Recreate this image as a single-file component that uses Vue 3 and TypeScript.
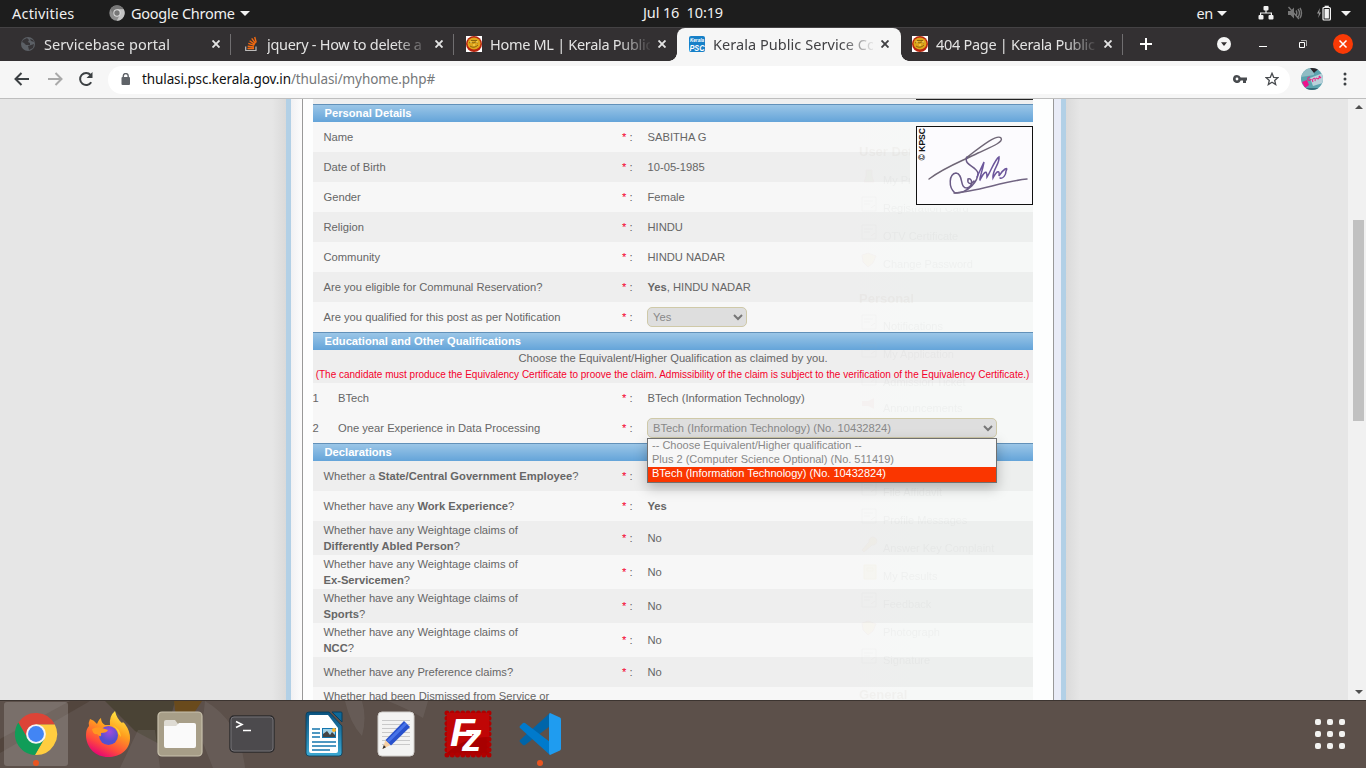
<script setup lang="ts">
interface Tab { title: string; icon: string; active?: boolean; snug?: boolean }
interface Row { label?: string; bold?: string; tail?: string; lines?: boolean; value?: string; strong?: string; select?: boolean; shade?: boolean }
interface Ghost { text: string; y: number; head?: boolean; icon?: string }

const tabs: Tab[] = [
  { title: 'Servicebase portal', icon: 'globe' },
  { title: 'jquery - How to delete a', icon: 'stack', snug: true },
  { title: 'Home ML | Kerala Public', icon: 'seal', snug: true },
  { title: 'Kerala Public Service Co', icon: 'psc', active: true },
  { title: '404 Page | Kerala Public', icon: 'seal', snug: true },
]

const personal: Row[] = [
  { label: 'Name', value: 'SABITHA G' },
  { label: 'Date of Birth', value: '10-05-1985', shade: true },
  { label: 'Gender', value: 'Female' },
  { label: 'Religion', value: 'HINDU', shade: true },
  { label: 'Community', value: 'HINDU NADAR' },
  { label: 'Are you eligible for Communal Reservation?', strong: 'Yes', value: ', HINDU NADAR', shade: true },
  { label: 'Are you qualified for this post as per Notification', select: true },
]

const declarations: Row[] = [
  { label: 'Whether a ', bold: 'State/Central Government Employee', tail: '?', shade: true },
  { label: 'Whether have any ', bold: 'Work Experience', tail: '?', strong: 'Yes' },
  { label: 'Whether have any Weightage claims of', lines: true, bold: 'Differently Abled Person', tail: '?', value: 'No', shade: true },
  { label: 'Whether have any Weightage claims of', lines: true, bold: 'Ex-Servicemen', tail: '?', value: 'No' },
  { label: 'Whether have any Weightage claims of', lines: true, bold: 'Sports', tail: '?', value: 'No', shade: true },
  { label: 'Whether have any Weightage claims of', lines: true, bold: 'NCC', tail: '?', value: 'No' },
  { label: 'Whether have any Preference claims?', value: 'No', shade: true },
  { label: 'Whether had been Dismissed from Service or', lines: true, bold: '' },
]

const ghosts: Ghost[] = [
  { text: 'User Details', y: 152, head: true },
  { text: 'My Profile', y: 180, icon: 'user' },
  { text: 'Registration Card', y: 208, icon: 'card' },
  { text: 'OTV Certificate', y: 236, icon: 'card' },
  { text: 'Change Password', y: 264, icon: 'gold' },
  { text: 'Personal', y: 299, head: true },
  { text: 'Notifications', y: 326, icon: 'card' },
  { text: 'My Application', y: 354, icon: 'card' },
  { text: 'Admission Ticket', y: 382, icon: 'card' },
  { text: 'Announcements', y: 408, icon: 'red' },
  { text: 'File Affidavit', y: 492, icon: 'card' },
  { text: 'Profile Messages', y: 520, icon: 'card' },
  { text: 'Answer Key Complaint', y: 548, icon: 'key' },
  { text: 'My Results', y: 576, icon: 'book' },
  { text: 'Feedback', y: 604, icon: 'card' },
  { text: 'Photograph', y: 632, icon: 'gold' },
  { text: 'Signature', y: 660, icon: 'card' },
  { text: 'General', y: 695, head: true },
]

const options = [
  '-- Choose Equivalent/Higher qualification --',
  'Plus 2 (Computer Science Optional) (No. 511419)',
  'BTech (Information Technology) (No. 10432824)',
]
</script>

<template>
  <div class="screen">
    <header class="topbar">
      <div class="top-left">
        <span class="activities">Activities</span>
        <svg class="app-icon" width="16" height="16" viewBox="0 0 48 48">
          <circle cx="24" cy="24" r="23" fill="#8d8d8d" />
          <path d="M4 13A23 23 0 0 1 44 13H24L15 29Z" fill="#777" />
          <path d="M44 13A23 23 0 0 1 23 47L33 29 24 13Z" fill="#c3c3c3" />
          <circle cx="24" cy="24" r="11" fill="#ddd" /><circle cx="24" cy="24" r="8" fill="#777" />
        </svg>
        <span class="app-name">Google Chrome</span>
        <i class="caret"></i>
      </div>
      <div class="clock">Jul 16&nbsp; 10:19</div>
      <div class="tray">
        <span class="lang">en</span><i class="caret"></i>
        <svg class="net" width="16" height="14" viewBox="0 0 16 14" fill="#f2f2f2">
          <rect x="5.5" y="0" width="5" height="4.5" rx="1" /><rect x="0.5" y="9" width="5" height="4.5" rx="1" /><rect x="10.5" y="9" width="5" height="4.5" rx="1" />
          <path d="M7.4 4h1.2v2.4H14V10h-1.2V7.6H3.2V10H2V6.4h5.4z" />
        </svg>
        <svg class="vol" width="16" height="14" viewBox="0 0 16 14" fill="none" stroke="#777" stroke-width="1.4">
          <path d="M1 5h2.5L7 1.5v11L3.500 9H1z" fill="#777" stroke="none" /><path d="M9 4.500q1.600 2.500 0 5M11 3q3 4 0 8M13 1.800q3 5.200 0 10.400M1.500 1l10.500 12" />
        </svg>
        <svg class="bat" width="16" height="16" viewBox="0 0 16 16">
          <path d="M4 3L1 8.600h2L2.200 13 5 7.400H3.200z" fill="#999" />
          <rect x="7" y="2.500" width="7.400" height="12.500" rx="1" fill="none" stroke="#f2f2f2" stroke-width="1.200" /><rect x="8.600" y="0.700" width="4.200" height="2" fill="#f2f2f2" /><rect x="8.500" y="4" width="4.400" height="9.500" fill="#f2f2f2" />
        </svg>
        <i class="caret"></i>
      </div>
    </header>

    <nav class="tabs">
      <div v-for="(tab, i) in tabs" :key="i" class="tab" :class="{ active: tab.active, bare: i === 2, snug: tab.snug }">
        <svg v-if="tab.icon === 'globe'" class="fav" viewBox="0 0 16 16">
          <circle cx="8" cy="8" r="7" fill="#5c6066" /><path d="M3 4l4-2 2 2-1 2 2 1v2H6L4 7 2 6zM8 10l3-1 3-1-1 4-4 2zM10 3l3 1 1 2-3-1z" fill="#373538" />
        </svg>
        <svg v-else-if="tab.icon === 'stack'" class="fav" viewBox="0 0 16 16" fill="none">
          <path d="M2.700 10.500v4h10.300v-4" stroke="#bcbbbb" stroke-width="1.200" />
          <path d="M4.500 12.500h6.500M4.700 10.200l6.300.8M5.300 7.300l6 2M6.600 4.700l5.200 3.700M8.700 2.300l3.800 5M11.700 1l1.500 5.500" stroke="#f46a10" stroke-width="1.400" />
        </svg>
        <svg v-else-if="tab.icon === 'seal'" class="fav" viewBox="0 0 16 16">
          <path fill="#fff" d="M0 0h16v16H0z" /><circle cx="8" cy="8" r="8" fill="#b9250f" /><ellipse cx="8" cy="7.500" rx="6.500" ry="6" fill="#dfa51b" /><path d="M3 7q2-2 4 0 2-2 5 0M4 10q4 3 8-1M5 4.500h6" stroke="#8a6510" fill="none" /><path d="M4 6h2M10 6h2M7 9h2" stroke="#ffe46c" />
        </svg>
        <svg v-else class="fav" viewBox="0 0 16 16">
          <rect width="16" height="16" rx="2" fill="#1680c8" /><text x="1" y="5.800" class="psc-small" textLength="14" lengthAdjust="spacingAndGlyphs">Kerala</text><text x="0.500" y="14.500" class="psc-big" textLength="15" lengthAdjust="spacingAndGlyphs">PSC</text>
        </svg>
        <span class="tab-title">{{ tab.title }}</span>
        <svg class="tab-x" width="8" height="8" viewBox="0 0 8 8"><path d="M.5.5l7 7M7.500.5l-7 7" stroke="currentColor" stroke-width="1.900" /></svg>
      </div>
      <svg class="plus" width="12" height="12" viewBox="0 0 12 12"><path d="M6 0v12M0 6h12" stroke="#fff" stroke-width="2" /></svg>
      <svg class="drop" width="14" height="14" viewBox="0 0 14 14"><circle cx="7" cy="7" r="7" fill="#f5f5f5" /><path d="M4 5.200h6L7 9z" fill="#333032" /></svg>
      <svg class="win" width="8" height="8" viewBox="0 0 8 8"><path d="M0 6.500h8" stroke="#fff" /></svg>
      <svg class="win2" width="8" height="8" viewBox="0 0 8 8" fill="none" stroke="#fff"><path d="M.5 2.500h5v5h-5z" /><path d="M2 .5h5.500V6" stroke="#aaa" /></svg>
      <svg class="quit" width="20" height="20" viewBox="0 0 20 20"><circle cx="10" cy="10" r="10" fill="#f93a06" /><path d="M6.500 6.500l7 7M13.500 6.500l-7 7" stroke="#fff" stroke-width="1.500" /></svg>
    </nav>

    <div class="toolbar">
      <svg class="back" width="16" height="14" viewBox="0 0 16 14" fill="none" stroke="#3c4043" stroke-width="2"><path d="M15 7H2M7.500 1l-6 6 6 6" /></svg>
      <svg class="fwd" width="16" height="14" viewBox="0 0 16 14" fill="none" stroke="#a9a9a9" stroke-width="2"><path d="M1 7h13M8.500 1l6 6-6 6" /></svg>
      <svg class="reload" width="16" height="16" viewBox="0 0 16 16"><path d="M13.200 11.200A6 6 0 1 1 12.600 4" fill="none" stroke="#3c4043" stroke-width="2" /><path d="M14.500 1v6h-6z" fill="#3c4043" /></svg>
      <div class="address">
        <svg class="lock" width="10" height="12" viewBox="0 0 10 12"><rect x="0.500" y="4" width="8.500" height="8" rx="1" fill="#5f6368" /><path d="M2.300 4.500V3a2.400 2.400 0 0 1 4.900 0v1.500" fill="none" stroke="#5f6368" stroke-width="1.400" /></svg>
        <span class="url"><b>thulasi.psc.kerala.gov.in</b>/thulasi/myhome.php#</span>
        <svg class="key" width="14" height="8" viewBox="0 0 14 8"><path d="M4 0a4 4 0 1 0 3.700 5.400H10V8h3V5.400h1V2.600H7.700A4 4 0 0 0 4 0zm0 2.600a1.400 1.400 0 1 1 0 2.800 1.400 1.400 0 0 1 0-2.800z" fill="#484b4f" fill-rule="evenodd" /></svg>
        <svg class="star" width="14" height="14" viewBox="0 0 14 14"><path d="M7 1.300l1.700 4 4.200.3-3.200 2.800 1 4.200L7 10.300l-3.700 2.300 1-4.200L1.100 5.600l4.200-.3z" fill="none" stroke="#484b4f" stroke-width="1.300" /></svg>
      </div>
      <svg class="avatar" width="22" height="22" viewBox="0 0 22 22">
        <defs><clipPath id="av"><circle cx="11" cy="11" r="11" /></clipPath></defs>
        <g clip-path="url(#av)"><path fill="#5ba3ae" d="M0 0h22v22H0z" /><path d="M0 0h13v7L0 9z" fill="#8fbcc4" /><path d="M9 0h10l-4 3-2 2z" fill="#2b252a" /><path d="M9 10l13-5v10l-10 3z" fill="#b9d1da" /><path d="M1 14l5-2 2 5-4 3z" fill="#ed128d" /><path d="M9 9q-3 0-2 3 2 1 3-1M11 11l1 3M12 11q3-2 2 2M15 10l2 1q2-1 1-3M18 8l2 2" stroke="#e82783" stroke-width="1.100" fill="none" /><path d="M5 20h14v2H5z" fill="#356c7a" /></g>
      </svg>
      <svg class="dots" width="4" height="14" viewBox="0 0 4 14" fill="#3c4043"><circle cx="2" cy="2" r="1.500" /><circle cx="2" cy="7" r="1.500" /><circle cx="2" cy="12" r="1.500" /></svg>
    </div>

    <main class="page">
      <div class="gutter left"></div>
      <div class="frame">
        <div class="paper">
          <div class="sheet">
            <div class="sliver"></div>
            <h2>Personal Details</h2>
            <div v-for="row in personal" :key="row.label" class="row" :class="{ shade: row.shade }">
              <div class="label">{{ row.label }}</div>
              <div class="req"><em>*</em> :</div>
              <div class="value">
                <div v-if="row.select" class="select short">Yes<svg width="10" height="7" viewBox="0 0 10 7"><path d="M1 1l4 4 4-4" /></svg></div>
                <template v-else><b v-if="row.strong">{{ row.strong }}</b>{{ row.value }}</template>
              </div>
            </div>
            <h2>Educational and Other Qualifications</h2>
            <div class="note">
              <p>Choose the Equivalent/Higher Qualification as claimed by you.</p>
              <p class="warn">(The candidate must produce the Equivalency Certificate to proove the claim. Admissibility of the claim is subject to the verification of the Equivalency Certificate.)</p>
            </div>
            <div class="row">
              <div class="label numbered"><span>1</span>BTech</div>
              <div class="req"><em>*</em> :</div>
              <div class="value">BTech (Information Technology)</div>
            </div>
            <div class="row">
              <div class="label numbered"><span>2</span>One year Experience in Data Processing</div>
              <div class="req"><em>*</em> :</div>
              <div class="value">
                <div class="select long">BTech (Information Technology) (No. 10432824)<svg width="10" height="7" viewBox="0 0 10 7"><path d="M1 1l4 4 4-4" /></svg>
                  <ul class="menu"><li v-for="(o, i) in options" :key="o" :class="{ on: i === 2 }">{{ o }}</li></ul>
                </div>
              </div>
            </div>
            <h2>Declarations</h2>
            <div v-for="(row, i) in declarations" :key="i" class="row" :class="{ shade: row.shade, tall: row.lines }">
              <div class="label"><span>{{ row.label }}<br v-if="row.lines"><b>{{ row.bold }}</b>{{ row.tail }}&nbsp;</span></div>
              <div class="req"><template v-if="i < 7"><em>*</em> :</template></div>
              <div class="value"><b v-if="row.strong">{{ row.strong }}</b>{{ row.value }}</div>
            </div>
          </div>
          <svg class="ghosts" width="175" height="601" viewBox="858 99 175 601">
            <g v-for="g in ghosts" :key="g.text" class="ghost">
              <text :x="g.head ? 859 : 883" :y="g.y + 4" :class="{ head: g.head }">{{ g.text }}</text>
              <path v-if="g.icon === 'card'" :transform="`translate(861 ${g.y - 12})`" d="M1 1h14v14H1zM3 5h9M3 8h6M10 12l4-3" fill="none" stroke="#b6a5a5" />
              <path v-else-if="g.icon === 'gold'" :transform="`translate(861 ${g.y - 12})`" d="M1 3l6-2 8 3-3 7-5 4-5-5z" fill="#f7d680" stroke="#d3a098" />
              <path v-else-if="g.icon === 'red'" :transform="`translate(861 ${g.y - 12})`" d="M1 5h6l6-3v11l-6-3H1z" fill="#e59b9b" />
              <path v-else-if="g.icon === 'key'" :transform="`translate(861 ${g.y - 12})`" d="M1 14l7-8a4 4 0 1 1 3 3l-8 7z" fill="#f5d57b" stroke="#d3a088" />
              <path v-else-if="g.icon === 'book'" :transform="`translate(861 ${g.y - 12})`" d="M3 1h12v14H3zM6 4h6v3H6z" fill="#f4e49c" stroke="#d3b058" />
              <path v-else-if="g.icon === 'user'" :transform="`translate(861 ${g.y - 12})`" d="M5 2h6v6l2 6H3l2-6z" fill="#bcd29a" stroke="#d3a0a0" />
            </g>
          </svg>
          <div class="photo-edge"></div>
          <div class="signature">
            <svg width="115" height="77" viewBox="0 0 115 77" fill="none" stroke-linecap="round">
              <text transform="translate(7.500 33.500) rotate(-90)" class="kpsc" textLength="32.500" lengthAdjust="spacingAndGlyphs">© KPSC</text>
              <path d="M12 52C28 40 43 35 61 26C74 20 87 15 84 11C80 7 66 18 49 31" stroke="#6f6676" stroke-width="1.400" />
              <path d="M50 30C46 38 59 39 61 46C61 54 52 66 38 66C31 60 32 47 39 46C47 47 42 61 50 61C57 59 55 50 51 52C50 57 54 58 57 54" stroke="#6a5a86" stroke-width="1.500" />
              <path d="M60 50L67 35C65 46 62 52 63 53C67 45 70 42 70 50C73 46 78 32 82 30C83 37 75 43 76 51C80 43 83 43 82 49C86 42 92 39 89 44C89 48 86 52 83 51" stroke="#6b559b" stroke-width="1.500" />
              <path d="M37 66C58 65 88 54 110 52" stroke="#716482" stroke-width="1.500" />
            </svg>
          </div>
        </div>
        <div class="lavender"></div>
      </div>
      <div class="gutter right"></div>
      <div class="scroll"><i class="up"></i><div class="thumb"></div><i class="down"></i></div>
    </main>

    <footer class="dock">
      <svg class="wall" width="1366" height="67" viewBox="0 0 1366 67">
        <path d="M0 38L70 0h20L0 52z" fill="#47392f" opacity=".5" /><path d="M105 0h70l-12 45-28-15z" fill="#403c29" opacity=".65" /><path d="M174 0h28l-8 12-18 4z" fill="#694a1c" /><path d="M120 67l18-38 17 0 5 38zM205 0q35 20 40 67h-32l-12-30zM345 0q5 22 17 35 5-18 0-35zM388 0q20 8 35 17l5-17z" fill="#817b76" opacity=".28" />
      </svg>
      <div class="launch focus">
        <svg width="46" height="46" viewBox="0 0 48 48"><path d="M5.540 12.030A22 22 0 0 1 43.600 14H24V24L15.340 29z" fill="#dc4437" /><path d="M43.600 14A22 22 0 0 1 22.860 45.970L32.660 29 24 24V14z" fill="#ffcd40" /><path d="M22.860 45.970A22 22 0 0 1 5.540 12.030L15.340 29 24 24 32.660 29z" fill="#109d58" /><circle cx="24" cy="24" r="10.300" fill="#f4f4f4" /><circle cx="24" cy="24" r="8.300" fill="#4285f4" /></svg>
        <i class="run"></i>
      </div>
      <div class="launch">
        <svg width="46" height="48" viewBox="0 0 46 48">
          <defs><linearGradient id="ff" x1=".8" y1="0" x2=".3" y2="1"><stop offset="0" stop-color="#fff04a" /><stop offset=".4" stop-color="#ffa01e" /><stop offset=".75" stop-color="#ff493d" /><stop offset="1" stop-color="#e40079" /></linearGradient><radialGradient id="fp" cx=".55" cy=".3"><stop offset="0" stop-color="#a34bdc" /><stop offset="1" stop-color="#5450cf" /></radialGradient></defs>
          <path d="M5 9Q9 10 12 14 14 9 16 8q0 5 4 7h5q-1-9 5-14 2 8 7 12 1-2 3 1 5 7 5 14C45 40 35 47 23 47S1 38 1 25q0-6 3-9-1-3 1-7z" fill="url(#ff)" /><circle cx="23.500" cy="25.500" r="9.500" fill="url(#fp)" /><path d="M7 19q5-3 10-1l6 2q-1 3-7 3 1 6-4 1-4 1-5-5z" fill="#ff9821" /><path d="M27 15q8 3 9 12l-3-4q-1-5-6-8z" fill="#ffcf2d" />
        </svg>
      </div>
      <div class="launch">
        <svg width="46" height="46" viewBox="0 0 46 46"><rect x="1" y="1" width="44" height="44" rx="4" fill="#a79e88" stroke="#c9c2ad" stroke-width="1.200" /><path d="M7 11q0-2 2-2h9l3 4h16q2 0 2 2v18H7z" fill="#dedbd3" /><path d="M7 15h12l3-3h15q2 0 2 2v21q0 2-2 2H9q-2 0-2-2z" fill="#fafafa" /></svg>
      </div>
      <div class="launch">
        <svg width="46" height="38" viewBox="0 0 46 38"><rect x="1" y="1" width="44" height="36" rx="4" fill="#4c4a4d" stroke="#2c2b2d" stroke-width="1.400" /><rect x="2" y="2" width="42" height="34" rx="3" fill="none" stroke="#747276" /><path d="M7 6.500l6 3-6 3M14 15.500h8" fill="none" stroke="#fff" stroke-width="1.600" /></svg>
      </div>
      <div class="launch">
        <svg width="38" height="46" viewBox="0 0 38 46"><defs><linearGradient id="lo" x2="0" y2="1"><stop stop-color="#0a527f" /><stop offset="1" stop-color="#3ca9d3" /></linearGradient></defs><path d="M4 1h20l13 14v27q0 3-3 3H4q-3 0-3-3V4q0-3 3-3z" fill="url(#lo)" stroke="#073c59" stroke-width=".8" /><path d="M27 1h9q1 0 1 1v9z" fill="#0f6999" stroke="#083f5e" /><path d="M5 4h18l10 13v23q0 2-2 2H6q-2 0-2-2V6q0-2 1-2z" fill="#fff" /><path d="M7 18h8M7 22h8M7 26h8M7 31h24M7 35h24M7 39h18" stroke="#1475ad" stroke-width="1.700" /><rect x="17.500" y="17.500" width="13" height="9" fill="#9fd1e7" stroke="#1475ad" /><path d="M18 26v-3l4-3 3 4 2-3 3 3v2z" fill="#444" /><circle cx="29" cy="19" r="2" fill="#fcb52a" /></svg>
      </div>
      <div class="launch">
        <svg width="38" height="46" viewBox="0 0 38 46"><rect x="1" y="1" width="36" height="44" rx="4" fill="#f3f3f2" stroke="#d0cecb" /><path d="M5 9.500h28M5 13.500h28M5 17.500h28M5 21.500h28M5 25.500h28M5 29.500h28M5 33.500h28" stroke="#c9c9c9" /><path d="M5.500 38l3-9 5 5z" fill="#f7cfa1" /><path d="M5.500 38l1.300-4 2.200 2.200z" fill="#35302c" /><path d="M8.500 29L27 10l6 6-19 18.500z" fill="#2851cc" /><path d="M10 29.500L28 11.500l2 2-18 18z" fill="#4673e8" /></svg>
      </div>
      <div class="launch">
        <svg width="48" height="48" viewBox="0 0 48 48"><rect x="3" y="3" width="42" height="42" fill="#a80000" stroke="#b00000" stroke-width="5" stroke-dasharray="0 5.250" stroke-linecap="round" /><path d="M3 3h42v24Q20 27 3 43z" fill="#c00606" /><text x="6" y="36" class="fz-f" textLength="25" lengthAdjust="spacingAndGlyphs">F</text><text x="18" y="41" class="fz-z">z</text></svg>
      </div>
      <div class="launch">
        <svg width="42" height="42" viewBox="0 0 42 42"><path d="M31 0L1 27q-1 1 0 2l3 3q1 .5 2 0L35 10z" fill="#0065a9" /><path d="M31 42L1 15q-1-1 0-2l3-3q1-.5 2 0l29 22z" fill="#007acc" /><path d="M31 0q-1 0-1 3v36q0 3 1 3l10-4.500q1-.5 1-2V6.500q0-1.500-1-2z" fill="#1f9cf0" /></svg>
        <i class="run"></i>
      </div>
      <svg class="apps" width="30" height="30" viewBox="0 0 30 30" fill="#f2f2f0"><template v-for="r in 3" :key="r"><rect v-for="c in 3" :key="c" :x="(c - 1) * 12" :y="(r - 1) * 12" width="6" height="6" rx="2" /></template></svg>
    </footer>
  </div>
</template>

<style>
body { margin: 0; overflow: hidden; }
</style>

<style scoped>
.screen { width: 1366px; height: 768px; overflow: hidden; font-family: "Noto Sans", sans-serif; display: flex; flex-direction: column; background: #e6e6e6; }
.screen svg { display: block; flex: none; }
.topbar { height: 27px; border-bottom: 1px solid #444244; background: #1d1d1d; color: #f0f0f0; font-size: 14.5px; line-height: 26px; display: grid; grid-template-columns: 1fr 100px 1fr; white-space: nowrap; }
.top-left, .tray { display: flex; align-items: center; height: 26px; }
.top-left { padding-left: 12px; }
.activities { width: 97px; letter-spacing: .2px; }
.app-name { width: 109px; margin-left: 6px; letter-spacing: -.25px; }
.clock { text-align: center; font-size: 14.5px; letter-spacing: -.13px; line-height: 25px; }
.caret { width: 0; height: 0; border: 5px solid transparent; border-top-color: #f2f2f2; border-bottom: 0; flex: none; }
.tray { justify-content: flex-end; padding-right: 15px; }
.lang { margin-right: 4px; letter-spacing: -.3px; }
.net { margin: 0 13px 0 31px; }
.vol { margin-right: 13px; }
.bat { margin-right: 9px; }
.tabs { height: 33px; background: #333032; display: flex; align-items: center; padding-left: 8px; color: #e3e3e3; font-size: 14.5px; }
.tab { width: 223px; height: 33px; box-sizing: border-box; flex: none; display: flex; align-items: center; padding-left: 12px; position: relative; }
.tab:not(.active):not(.bare)::after { content: ""; position: absolute; right: 0; top: 6px; width: 1px; height: 21px; background: #706e70; }
.fav { width: 16px; height: 16px; margin-top: -1px; }
.tab-title { width: 160px; margin-left: 8px; margin-right: 8px; overflow: hidden; white-space: nowrap; flex: none; line-height: 28px; height: 30px; letter-spacing: .05px; mask-image: linear-gradient(90deg, #000 128px, transparent 163px); }
.snug .tab-title { letter-spacing: -.3px; }
.tab-x { margin-top: -1px; }
.active { background: #f6f6f6; color: #414144; border-radius: 8px 8px 0 0; z-index: 1; width: 224px; margin-right: -1px; height: 33px; }
.active::before { content: ""; position: absolute; left: -8px; right: -8px; bottom: 0; height: 8px; background: radial-gradient(circle at 0 0, transparent 7.500px, #f6f6f6 8px) left / 8px 8px no-repeat, radial-gradient(circle at 100% 0, transparent 7.500px, #f6f6f6 8px) right / 8px 8px no-repeat; }
.psc-small { font: italic bold 6px "Liberation Sans", sans-serif; fill: #fff; }
.psc-big { font: italic bold 8.500px "Liberation Sans", sans-serif; fill: #fff; }
.plus { margin-left: 17px; margin-top: -1px; }
.drop { margin-left: 65px; margin-top: -1px; }
.win { margin-left: 28px; margin-top: -1px; }
.win2 { margin-left: 32px; margin-top: -1px; }
.quit { margin-left: 26px; margin-top: -1px; }
.toolbar { height: 37px; background: #f6f6f6; border-bottom: 1px solid #bebebe; display: flex; align-items: center; flex: none; }
.toolbar > svg { margin-top: -1px; }
.back { margin-left: 14px; }
.fwd { margin-left: 17px; }
.reload { margin-left: 15px; }
.address { margin-left: 14px; width: 1182px; height: 28px; border-radius: 14px; background: #fff; display: flex; align-items: center; box-sizing: border-box; padding: 0 11px 1px 13px; }
.url { margin-left: 11px; flex: 1; color: #76787a; font-size: 13.500px; letter-spacing: -.1px; line-height: 26px; white-space: nowrap; }
.url b { font-weight: 400; color: #111; }
.star { margin-left: 18px; }
.avatar { margin-left: 11px; }
.dots { margin-left: 20px; }
.page { flex: none; height: 601px; display: flex; overflow: hidden; font: 11.2px/16px "Liberation Sans", Arial, sans-serif; color: #666; }
.gutter { background: #e6e6e6; }
.left { width: 286px; background: linear-gradient(90deg, #e6e6e6 272px, #dadada); }
.right { width: 282px; background: linear-gradient(90deg, #dadada, #e6e6e6 14px); }
.frame { width: 770px; border: solid #b2d0e6; border-width: 0 5px; display: flex; background: linear-gradient(90deg, #f1f1f3, #fcfcfc 11px); }
.paper { width: 750px; margin-left: 11px; border: solid #999; border-width: 0 1px; background: #fdfefe; position: relative; }
.lavender { width: 7px; background: #e9ecf7; }
.sheet { width: 720px; margin-left: 10px; background: #f7f7f7; }
.sliver { height: 5px; background: #efefef; }
h2 { margin: 0; height: 18px; box-sizing: border-box; border-top: 1px solid #6291b9; background: linear-gradient(#9bc6e7, #64a4d9); color: #fff; font-size: 11.2px; line-height: 17px; padding-left: 11.500px; }
.row { height: 30px; display: grid; grid-template-columns: 309px 25.500px 1fr; align-items: center; background: linear-gradient(90deg, #f7f7f7 540px, #f6f8f7 600px); }
.shade { background: linear-gradient(90deg, #eee 540px, #edefee 600px); }
.tall { height: 34px; }
.label { padding-left: 10.500px; }
.numbered { padding-left: 0; display: flex; }
.numbered span { width: 25.500px; margin-left: -.5px; }
.req em { color: #f5002c; font-style: normal; }
.note { height: 33px; background: #eee; text-align: center; white-space: nowrap; }
.note p { margin: 0; }
.note .warn { color: #f5002c; font-size: 10px; line-height: 17px; margin-left: -1px; }
.select { position: relative; z-index: 2; box-sizing: border-box; height: 20px; border: 1px solid #cfc9a8; border-radius: 5px; background: #dedede; color: #888; padding-left: 5px; line-height: 18px; margin-left: -.5px; display: flex; align-items: center; justify-content: space-between; padding-right: 3px; }
.select svg path { fill: none; stroke: #777; stroke-width: 2; }
.short { width: 100px; }
.long { width: 350px; }
.menu { position: absolute; z-index: 3; top: 19px; left: -1px; width: 350px; height: 45px; box-sizing: border-box; margin: 0; padding: 0; list-style: none; border: 1px solid #707070; background: #f7f7f7; box-shadow: 0 5px 12px rgba(0, 0, 0, .25); color: #888; font-size: 11px; }
.menu li { height: 14px; line-height: 13px; padding-left: 4px; white-space: nowrap; }
.menu .on { background: #fa3600; color: #fff; height: 15px; }
.ghosts { position: absolute; right: 20px; top: 0; pointer-events: none; }
.ghost { opacity: .055; fill: #777; font: 11px "Liberation Sans", sans-serif; }
.ghost .head { font-weight: bold; font-size: 13px; fill: #998068; }
.photo-edge { position: absolute; right: 20px; top: 0; width: 117px; height: 1px; background: #222; }
.signature { position: absolute; right: 20px; top: 27px; width: 115px; height: 77px; border: 1px solid #111; background: #fcfbfe; box-shadow: -3px 0 0 3px #f7f8f8; clip-path: inset(-4px 0 -6px -6px); }
.kpsc { font: bold 8.500px "Liberation Sans", sans-serif; fill: #151515; }
.scroll { width: 18px; background: #f1f1f1; display: flex; flex-direction: column; align-items: center; }
.scroll i { width: 0; height: 0; border: 4px solid transparent; margin-left: 3px; }
.up { border-bottom-color: #505050 !important; border-top: 0 !important; margin-top: 6px; }
.down { border-top-color: #505050 !important; border-bottom: 0 !important; margin-top: 269px; }
.thumb { width: 11px; height: 201px; background: #c1c1c1; margin: 111px 0 0 3px; }
.dock { height: 66px; padding-top: 1px; border-top: 1px solid #3c3430; background: #5c504a; display: flex; align-items: flex-start; position: relative; padding-left: 4px; }
.wall { position: absolute; left: 0; top: 0; }
.launch { width: 64px; height: 64px; margin-right: 8px; display: flex; align-items: center; justify-content: center; position: relative; border-radius: 3px; }
.focus { background: rgba(255, 255, 255, .18); }
.run { position: absolute; width: 6px; height: 6px; left: 29px; bottom: 0; border-radius: 50%; background: #e95420; }
.fz-f { font: italic bold 39px "Liberation Sans", sans-serif; fill: #fff; }
.fz-z { font: italic bold 39px "Liberation Sans", sans-serif; fill: #fff; }
.apps { margin-left: auto; margin-right: 21px; margin-top: 17px; }
</style>
